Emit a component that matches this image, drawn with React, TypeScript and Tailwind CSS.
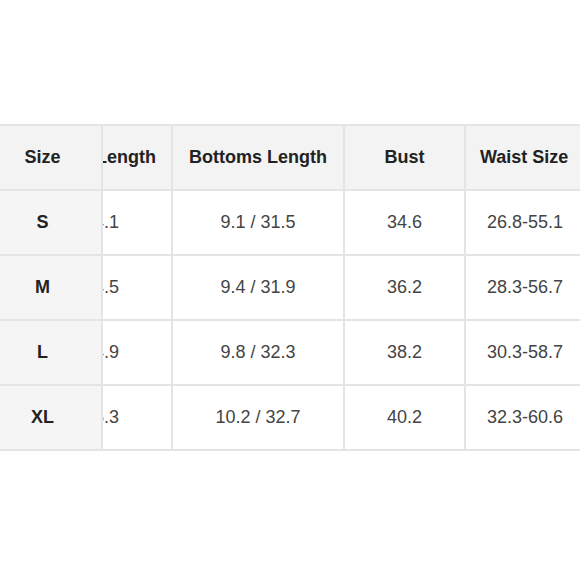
import * as React from "react";

const ROWS = [
  {size: "S", top: "24.1", bottoms: "9.1 / 31.5", bust: "34.6", waist: "26.8-55.1"},
  {size: "M", top: "24.5", bottoms: "9.4 / 31.9", bust: "36.2", waist: "28.3-56.7"},
  {size: "L", top: "24.9", bottoms: "9.8 / 32.3", bust: "38.2", waist: "30.3-58.7"},
  {size: "XL", top: "25.3", bottoms: "10.2 / 32.7", bust: "40.2", waist: "32.3-60.6"},
];

const cell = "flex h-[65px] items-center justify-center border-r-2 border-b-2 border-[#e4e4e4]";

const App: React.FC = () => {
  return (
    <div
      className="h-[580px] w-[580px] overflow-hidden bg-white pt-[124px]"
      style={{fontFamily: '"Liberation Sans", Arial, sans-serif'}}
    >
      <div className="grid w-[640px] grid-cols-[103px_70px_172px_121px_174px] border-t-2 border-[#e4e4e4] text-[18px]">
        {/* header */}
        <div className={`${cell} bg-[#f3f3f3] pr-[16px] font-bold text-[#222]`}>Size</div>
        <div className={`${cell} justify-end overflow-hidden bg-[#f3f3f3] pr-[15px] font-bold text-[#222]`}>
          <span className="whitespace-nowrap">Top Length</span>
        </div>
        <div className={`${cell} bg-[#f3f3f3] font-bold text-[#222]`}>Bottoms Length</div>
        <div className={`${cell} bg-[#f3f3f3] font-bold text-[#222]`}>Bust</div>
        <div className={`${cell} justify-start bg-[#f3f3f3] pl-[14px] font-bold text-[#222]`}>Waist Size</div>

        {ROWS.map((r) => (
          <React.Fragment key={r.size}>
            <div className={`${cell} bg-[#f5f5f5] pr-[16px] font-bold text-[#222]`}>{r.size}</div>
            <div className={`${cell} justify-end overflow-hidden bg-white pr-[52px] text-[#444]`}>
              <span className="whitespace-nowrap">{r.top}</span>
            </div>
            <div className={`${cell} bg-white text-[#444]`}>{r.bottoms}</div>
            <div className={`${cell} bg-white text-[#444]`}>{r.bust}</div>
            <div className={`${cell} justify-start bg-white pl-[21px] text-[#444]`}>{r.waist}</div>
          </React.Fragment>
        ))}
      </div>
    </div>
  );
};

export default App;
